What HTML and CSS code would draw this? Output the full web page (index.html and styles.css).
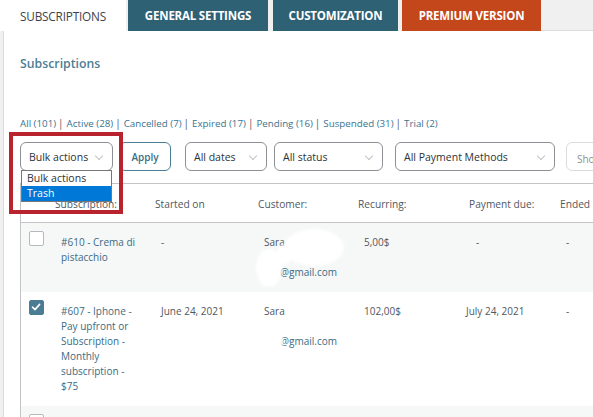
FILE: index.html
```html
<!DOCTYPE html>
<html lang="en">
<head>
<meta charset="utf-8">
<title>Subscriptions</title>
<link rel="stylesheet" href="styles.css">
</head>
<body>
<div class="page">
  <nav class="tabs">
    <a class="tab active">SUBSCRIPTIONS</a>
    <a class="tab teal">GENERAL SETTINGS</a>
    <a class="tab teal">CUSTOMIZATION</a>
    <a class="tab premium">PREMIUM VERSION</a>
    <span class="tab-fill"></span>
  </nav>
  <main class="content">
    <h2 class="title">Subscriptions</h2>
    <ul class="views">
      <li><a>All (101)</a><span class="sep">|</span></li>
      <li><a>Active (28)</a><span class="sep">|</span></li>
      <li><a>Cancelled (7)</a><span class="sep">|</span></li>
      <li><a>Expired (17)</a><span class="sep">|</span></li>
      <li><a>Pending (16)</a><span class="sep">|</span></li>
      <li><a>Suspended (31)</a><span class="sep">|</span></li>
      <li><a>Trial (2)</a></li>
    </ul>
    <div class="controls">
      <div class="select w-bulk">Bulk actions<span class="chev"></span></div>
      <button class="apply">Apply</button>
      <div class="select w-dates">All dates<span class="chev"></span></div>
      <div class="select w-status">All status<span class="chev"></span></div>
      <div class="select w-pay">All Payment Methods<span class="chev"></span></div>
      <div class="search">Sho</div>
      <div class="dropdown">
        <div class="opt">Bulk actions</div>
        <div class="opt sel">Trash</div>
      </div>
      <div class="annot"></div>
    </div>
    <div class="table">
      <div class="row head">
        <div class="c chk"></div>
        <div class="c">Subscription:</div>
        <div class="c">Started on</div>
        <div class="c">Customer:</div>
        <div class="c">Recurring:</div>
        <div class="c pay">Payment due:</div>
        <div class="c">Ended</div>
      </div>
      <div class="row alt">
        <div class="c chk"><span class="box"></span></div>
        <div class="c link">#610 - Crema di pistacchio</div>
        <div class="c">-</div>
        <div class="c cust">Sara<br><span class="hidden">&nbsp;</span><br><a class="mail">@gmail.com</a>
          <span class="blob b1"></span><span class="blob b2"></span><span class="blob b3"></span>
        </div>
        <div class="c">5,00$</div>
        <div class="c due-dash">-</div>
        <div class="c">-</div>
      </div>
      <div class="row">
        <div class="c chk"><span class="box on"><svg viewBox="0 0 14 14" width="14" height="14"><path d="M3.5 7.2 L6 9.6 L10.6 4.4" fill="none" stroke="#fff" stroke-width="1.6" stroke-linecap="round" stroke-linejoin="round"/></svg></span></div>
        <div class="c link">#607 - Iphone - Pay upfront or Subscription - Monthly subscription - $75</div>
        <div class="c">June 24, 2021</div>
        <div class="c cust">Sara<br><span class="hidden">&nbsp;</span><br><a class="mail">@gmail.com</a>
          <span class="blob b4"></span>
        </div>
        <div class="c">102,00$</div>
        <div class="c">July 24, 2021</div>
        <div class="c">-</div>
      </div>
      <div class="row alt">
        <div class="c chk"><span class="box"></span></div>
        <div class="c"></div>
        <div class="c"></div>
        <div class="c"></div>
        <div class="c"></div>
        <div class="c"></div>
        <div class="c"></div>
      </div>
    </div>
  </main>
</div>
</body>
</html>
```
FILE: styles.css
```css
* { box-sizing: border-box; }
html, body { margin: 0; padding: 0; }
body {
  font-family: "Open Sans", "Noto Sans", sans-serif;
  background: #f0f0f1;
  width: 593px;
  height: 417px;
  overflow: hidden;
  color: #50575e;
}
.page {
  margin-left: 3px;
  border-left: 1px solid #dcdcde;
  background: #fff;
  min-height: 417px;
}
.tabs {
  display: flex;
  height: 31px;
  margin-left: -4px;
  background: #f0f0f1;
}
.tab {
  display: flex;
  align-items: center;
  justify-content: center;
  flex: none;
  height: 31px;
  font-size: 11.5px;
  font-weight: 700;
  letter-spacing: -0.2px;
  color: #fff;
  margin-right: 4px;
}
.tab.active {
  width: 126px;
  background: #fff;
  color: #3c434a;
  font-weight: 400;
  font-size: 11.8px;
  margin-right: 2px;
}
.tab.teal { background: #2f6175; }
.tab.teal:nth-child(2) { width: 140px; margin-right: 5px; }
.tab.teal:nth-child(3) { width: 125px; }
.tab.premium { width: 139px; background: #c4461b; margin-right: 0; }
.tab-fill { flex: 1; border-bottom: 1px solid #dcdcde; }

.content { padding: 0 0 0 16px; }
.title {
  margin: 0;
  padding-top: 24px;
  height: 82px;
  font-size: 12.3px;
  font-weight: 600;
  color: #4d7d93;
}
.views {
  list-style: none;
  margin: 0;
  padding: 1px 0 0 0;
  display: flex;
  font-size: 9.75px;
  height: 19px;
  line-height: 19px;
}
.views a { color: #3a7290; }
.views .sep { color: #50575e; margin: 0 3px 0 2px; font-size: 10px; }

.controls {
  position: relative;
  display: flex;
  align-items: center;
  height: 40px;
  padding-top: 10px;
  padding-bottom: 1px;
}
.select {
  position: relative;
  flex: none;
  height: 29px;
  border: 1px solid #8c8f94;
  border-radius: 6px;
  font-size: 10.5px;
  color: #2c3338;
  display: flex;
  align-items: center;
  padding-left: 8px;
  margin-right: 7px;
  background: #fff;
}
.chev {
  position: absolute;
  right: 10px;
  top: 10px;
  width: 6px;
  height: 6px;
  border-right: 1px solid #c3c4c7;
  border-bottom: 1px solid #c3c4c7;
  transform: rotate(45deg);
}
.w-bulk { width: 93px; margin-right: 6px; }
.w-dates { width: 82px; }
.w-status { width: 109px; margin-right: 12px; }
.w-pay { width: 160px; margin-right: 11px; }
.apply {
  flex: none;
  height: 29px;
  width: 52px;
  border: 1px solid #4a7e95;
  border-radius: 6px;
  background: #fff;
  color: #3a6f87;
  font-family: inherit;
  font-size: 10px;
  font-weight: 600;
  margin-right: 14px;
  padding: 0;
}
.search {
  flex: none;
  width: 60px;
  height: 29px;
  border: 1px solid #dcdcde;
  border-radius: 6px;
  font-size: 10px;
  color: #8c8f94;
  display: flex;
  align-items: center;
  padding-left: 10px;
  padding-top: 4px;
}
.dropdown {
  position: absolute;
  left: 1px;
  top: 38px;
  width: 91px;
  border: 1px solid #767676;
  background: #fff;
  font-size: 10.5px;
  color: #2c3338;
  z-index: 3;
}
.opt { height: 15px; line-height: 15px; padding-left: 5px; }
.opt.sel { background: #0078d7; color: #fff; }
.annot {
  position: absolute;
  left: -11px;
  top: 0;
  width: 114px;
  height: 82px;
  border: 4px solid #b8232d;
  z-index: 4;
}

.table {
  margin-top: 11px;
  border-top: 1px solid #c3c4c7;
  border-left: 1px solid #c3c4c7;
}
.row {
  display: grid;
  grid-template-columns: 30px 100px 103px 100px 102px 100px 1fr;
  font-size: 10px;
  line-height: 15px;
  color: #50575e;
}
.row .c { padding: 12px 0 12px 10px; }
.row .chk { padding: 8px 0 0 8px; }
.row.head { height: 39px; border-bottom: 1px solid #c3c4c7; font-size: 10.2px; }
.row.head .c { padding: 13px 0 0 4px; }
.row.head .pay { padding-left: 13px; }
.row.alt { background: #f6f7f7; }
.row .link { color: #3b6b84; padding-right: 12px; }
.row .due-dash { padding-left: 20px; }
.box {
  display: block;
  width: 15px;
  height: 15px;
  border: 1px solid #b5b8bc;
  border-radius: 2px;
  background: #fff;
}
.box.on { background: #4c7c93; border-color: #4c7c93; }
.box svg { display: block; margin: -1px; }
.cust { position: relative; }
.mail { color: #3b6b84; padding-left: 16px; display: inline-block; }
.blob {
  position: absolute;
  background: #fff;
  border-radius: 50%;
  filter: blur(1.5px);
}
.b1 { left: 30px; top: 6px; width: 60px; height: 37px; }
.b2 { left: 2px; top: 26px; width: 26px; height: 38px; }
.b3 { left: 22px; top: 22px; width: 16px; height: 20px; }
.b4 { left: 24px; top: 40px; width: 5px; height: 14px; border-radius: 2px; }
```
